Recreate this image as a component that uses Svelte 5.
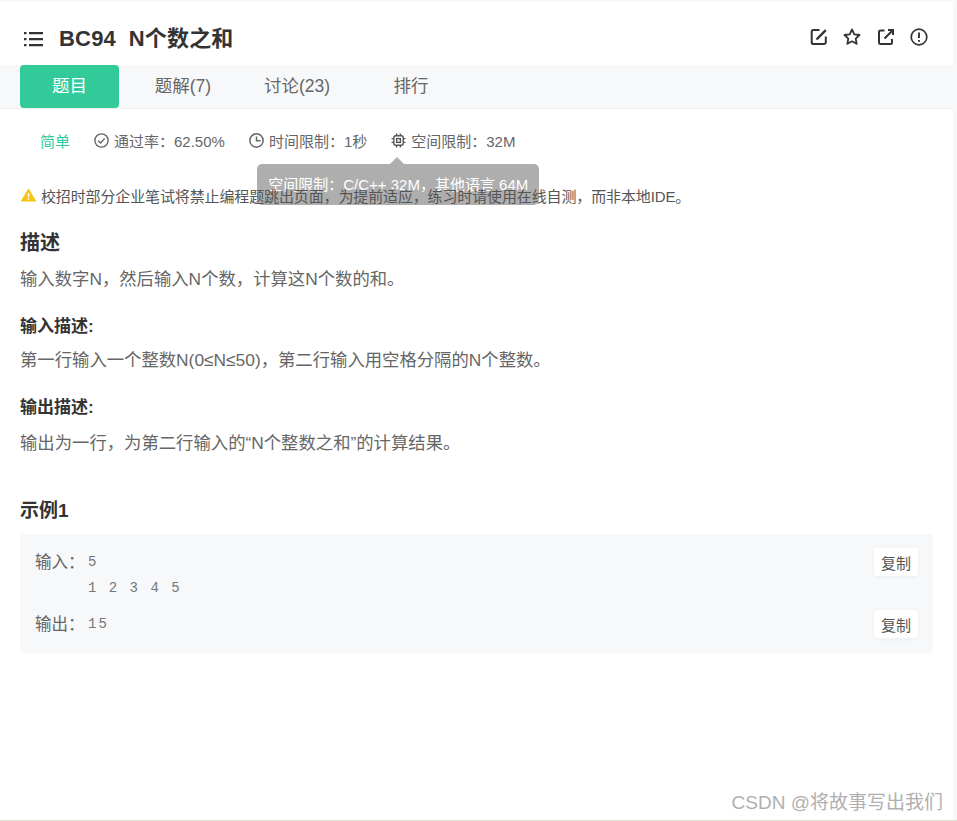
<script>
  const tabs = [
    { label: "题目", active: true },
    { label: "题解(7)" },
    { label: "讨论(23)" },
    { label: "排行" },
  ];
</script>

<div class="page">
  <div class="card">
    <header class="head">
      <svg class="list-icon" viewBox="0 0 20 20" width="20" height="20">
        <path d="M1 3h2.500v2.200H1zM1 9h2.500v2.200H1zM1 15h2.500v2.200H1z" fill="#333" />
        <path d="M6 4.100h14M6 10.100h14M6 16.100h14" stroke="#333" stroke-width="2.200" fill="none" />
      </svg>
      <h1>BC94&nbsp; N个数之和</h1>
      <div class="actions">
        <svg viewBox="0 0 18 18" width="18" height="18" fill="none" stroke="#333" stroke-width="2">
          <path d="M9.500 2H3.500A1.800 1.800 0 0 0 1.700 3.800v10.500a1.800 1.800 0 0 0 1.800 1.800H14a1.800 1.800 0 0 0 1.800-1.800V8.500" />
          <path d="M6.500 11.500 15.800 2.200" stroke-width="2.400" />
        </svg>
        <svg viewBox="0 0 18 18" width="18" height="18" fill="none" stroke="#333" stroke-width="1.800" stroke-linejoin="round">
          <path d="M9 1.500l2.300 4.800 5.200.7-3.800 3.600 1 5.200L9 13.300l-4.700 2.500 1-5.200L1.500 7l5.200-.7z" />
        </svg>
        <svg viewBox="0 0 18 18" width="18" height="18" fill="none" stroke="#333" stroke-width="2">
          <path d="M7.500 2.500H3.500A1.500 1.500 0 0 0 2 4v10.500A1.500 1.500 0 0 0 3.500 16h10a1.500 1.500 0 0 0 1.500-1.500V11" />
          <path d="M7.500 10.500 15.500 2.500M11 2h5v5" />
        </svg>
        <svg viewBox="0 0 18 18" width="18" height="18" fill="none" stroke="#333" stroke-width="1.700">
          <circle cx="9" cy="9" r="7.800" />
          <path d="M9 4.500v5.500" stroke-width="1.900" />
          <path d="M9 12v1.800" stroke-width="1.900" />
        </svg>
      </div>
    </header>

    <nav class="tabs">
      {#each tabs as t}
        <div class="tab" class:active={t.active}>{t.label}</div>
      {/each}
    </nav>

    <div class="meta">
      <span class="level">简单</span>
      <span class="item">
        <svg viewBox="0 0 14 14" width="15" height="15" fill="none" stroke="#666" stroke-width="1.300">
          <circle cx="7" cy="7" r="6.200" />
          <path d="M4 7.200 6.200 9.300 10 5" />
        </svg>
        通过率：62.50%
      </span>
      <span class="item">
        <svg viewBox="0 0 14 14" width="15" height="15" fill="none" stroke="#666" stroke-width="1.400">
          <circle cx="7" cy="7" r="6.200" />
          <path d="M7 3.200V7.300H10.800" />
        </svg>
        时间限制：1秒
      </span>
      <span class="item mem">
        <svg viewBox="0 0 16 16" width="15" height="15" fill="none" stroke="#555" stroke-width="1.500">
          <rect x="3" y="3" width="10" height="10" rx="2" />
          <rect x="6" y="6" width="4" height="4" />
          <path d="M6 .6V3M10 .6V3M6 13v2.400M10 13v2.400M.6 6H3M.6 10H3M13 6h2.400M13 10h2.400" />
        </svg>
        空间限制：32M
        <div class="tooltip">空间限制：C/C++ 32M，其他语言 64M</div>
      </span>
    </div>

    <p class="warn">
      <svg viewBox="0 0 16 14" width="15" height="14">
        <path d="M8 .5 15.700 13.500H.3z" fill="#f5c518" stroke="#f5c518" stroke-linejoin="round" />
        <path d="M8 4.800v4.600M8 10.500v1.500" stroke="#fff" stroke-width="1.400" />
      </svg>
      校招时部分企业笔试将禁止编程题跳出页面，为提前适应，练习时请使用在线自测，而非本地IDE。
    </p>

    <section class="desc">
      <h2>描述</h2>
      <p>输入数字N，然后输入N个数，计算这N个数的和。</p>
      <h3>输入描述:</h3>
      <p>第一行输入一个整数N(0≤N≤50)，第二行输入用空格分隔的N个整数。</p>
      <h3>输出描述:</h3>
      <p>输出为一行，为第二行输入的“N个整数之和”的计算结果。</p>
    </section>

    <section class="example">
      <h2>示例1</h2>
      <div class="box">
        <div class="row">
          <span class="key">输入：</span>
          <pre>5
1 2 3 4 5</pre>
          <button>复制</button>
        </div>
        <div class="row">
          <span class="key">输出：</span>
          <pre>15</pre>
          <button>复制</button>
        </div>
      </div>
    </section>
  </div>
  <div class="mark">CSDN @将故事写出我们</div>
</div>

<style>
  :global(body) {
    margin: 0;
    background: #f7f8fa;
  }

  .page {
    position: relative;
    height: 821px;
    padding-top: 2px;
    box-sizing: border-box;
    overflow: hidden;
    border-bottom: 1px solid #dcdfd0;
    font-family: "Liberation Sans", "Noto Sans CJK SC", sans-serif;
    color: #666;
  }

  .card {
    width: 953px;
    height: 818px;
    background: #fff;
  }

  .head {
    display: flex;
    align-items: center;
    height: 63px;
    padding: 10px 25px 0 23px;
    box-sizing: border-box;
  }

  .list-icon {
    margin-right: 16px;
  }

  h1 {
    margin: 0;
    font-size: 22px;
    line-height: 30px;
    font-weight: 700;
    color: #333;
    letter-spacing: 0.2px;
  }

  .actions {
    margin: -4px 0 0 auto;
    display: flex;
    gap: 15.500px;
  }

  .tabs {
    display: flex;
    height: 44px;
    padding-left: 20px;
    background: #f7f8fa;
    border-bottom: 1px solid #f0f1f3;
    box-sizing: border-box;
  }

  .tab {
    width: 114px;
    line-height: 43px;
    text-align: center;
    font-size: 17.500px;
    color: #666;
  }

  .tab.active {
    width: 99px;
    height: 43px;
    margin-right: 7px;
    background: #32ca99;
    color: #fff;
    border-radius: 4px;
  }

  .meta {
    display: flex;
    align-items: center;
    gap: 24px;
    height: 20px;
    margin: 21px 0 0 40px;
    font-size: 15px;
  }

  .level {
    color: #32ca99;
  }

  .item {
    display: flex;
    align-items: center;
    gap: 5px;
    white-space: nowrap;
  }

  .mem {
    position: relative;
  }

  .tooltip {
    position: absolute;
    z-index: 1;
    left: -134px;
    top: 34px;
    width: 282px;
    height: 41px;
    line-height: 41px;
    text-align: center;
    background: #aeaeae;
    border-radius: 5px;
    color: #fff;
    font-size: 15px;
  }

  .tooltip::before {
    content: "";
    position: absolute;
    left: 133px;
    top: -7px;
    border: 7px solid transparent;
    border-top: 0;
    border-bottom-color: #aeaeae;
  }

  .warn {
    position: relative;
    z-index: 2;
    display: flex;
    align-items: center;
    gap: 5px;
    margin: 35px 0 0 21px;
    height: 20px;
    font-size: 15px;
    letter-spacing: -0.130px;
    color: #555;
    white-space: nowrap;
  }

  .desc {
    margin: 0 20px;
    padding-top: 25px;
  }

  h2 {
    margin: 0;
    font-size: 20px;
    line-height: 26px;
    font-weight: 700;
    color: #333;
  }

  h3 {
    margin: 25px 0 0;
    font-size: 17px;
    line-height: 22px;
    font-weight: 700;
    color: #333;
  }

  .desc p {
    margin: 11px 0 0;
    font-size: 17.350px;
    line-height: 24px;
    color: #666;
  }

  .desc h3 + p {
    margin-top: 10px;
  }

  .desc p:last-child {
    margin-top: 12px;
  }

  .example {
    margin: 0 20px;
    padding-top: 43px;
  }

  .example h2 {
    font-size: 19px;
  }

  .box {
    margin-top: 10px;
    padding: 15px;
    height: 119px;
    box-sizing: border-box;
    background: #f7f8fa;
    border-radius: 4px;
  }

  .row {
    display: flex;
    align-items: flex-start;
    margin-bottom: 10px;
  }

  .key {
    width: 53px;
    font-size: 16.500px;
    line-height: 26px;
    flex: none;
  }

  pre {
    margin: 0;
    flex: 1;
    font-family: "Liberation Mono", monospace;
    font-size: 14px;
    line-height: 26px;
    letter-spacing: 2px;
    color: #777;
  }

  button {
    width: 44px;
    height: 28px;
    margin-top: -1px;
    padding: 0;
    border: 0;
    background: #fff;
    border-radius: 3px;
    box-shadow: 0 1px 4px rgba(0, 0, 0, 0.05);
    font: 15px "Liberation Sans", "Noto Sans CJK SC", sans-serif;
    color: #555;
  }

  .mark {
    position: absolute;
    right: 14px;
    bottom: 3px;
    font-size: 19px;
    line-height: 28px;
    color: #b0b0b0;
  }
</style>
